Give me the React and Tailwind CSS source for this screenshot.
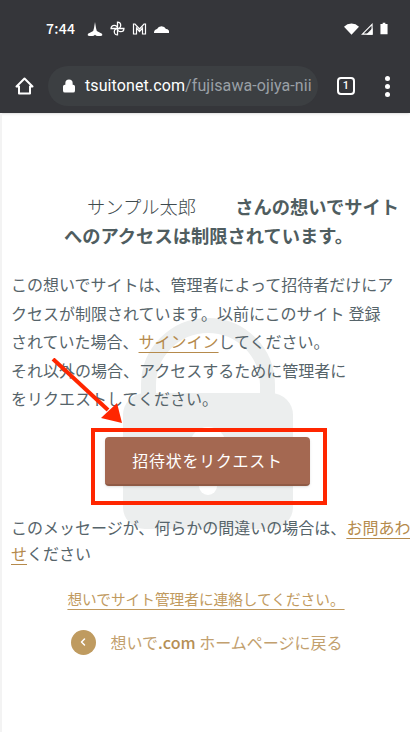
import { ChevronLeft, Lock } from "lucide-react";

const Lines = () => (
  <p>
    この想いでサイトは、管理者によって招待者だけにア
    <br />
    クセスが制限されています。以前にこのサイト<span className="ml-[4px]">登録</span>
    <br />
    されていた場合、
    <a className="text-[#b58a4c] underline underline-offset-4">サインイン</a>
    してください。
    <br />
    それ以外の場合、アクセスするために管理者に
    <br />
    をリクエストしてください。
  </p>
);

const LockMark = () => (
  <svg className="absolute left-[123px] top-[205px] pointer-events-none" width="172" height="212" viewBox="0 0 172 212">
    <path d="M25.500 90V67a59.500 59.500 0 0 1 119 0v23" fill="none" stroke="#eceeee" strokeWidth="15" />
    <rect x="0" y="75" width="170" height="136" rx="22" fill="#eceeee" />
    <circle cx="85" cy="127" r="18" fill="#fff" />
    <rect x="76" y="127" width="18" height="50" rx="9" fill="#fff" />
  </svg>
);

const StatusBar = () => (
  <div className="h-[59px] flex items-center pl-[46px] pr-[22px] text-white">
    <span className="text-[14px] font-medium tracking-[0.3px] w-[41px] -mt-[2px]">7:44</span>
    <div className="flex items-center gap-[7px] -mt-[2px]">
      <svg width="16" height="14" viewBox="0 0 16 14" fill="#fff">
        <path d="M8 0L9 6L9.800 9L15 11.800Q16 14 13.500 14H10.800Q9 14 8 12.800Q7 14 5.200 14H2.500Q0 14 1 11.800L6.200 9L7 6z" />
      </svg>
      <svg width="15" height="15" viewBox="0 0 14 14" fill="none" stroke="#fff" strokeWidth="1.200">
        <path d="M7 7V1a3 3 0 0 1 0 6zM7 7h6a3 3 0 0 1-6 0zM7 7v6a3 3 0 0 1 0-6zM7 7H1a3 3 0 0 1 6 0z" />
      </svg>
      <svg width="15" height="12" viewBox="0 0 14 12" fill="none" stroke="#fff" strokeWidth="1.200">
        <path d="M1 11V1h1.500L7 6l4.500-5H13v10H10V5L7 8.500 4 5v6z" />
      </svg>
      <svg width="15" height="9" viewBox="0 0 15 9" fill="#fff">
        <path d="M0 9a4 4 0 0 1 3-4 5 5 0 0 1 9 0 3 3 0 0 1 3 4z" />
      </svg>
    </div>
    <div className="ml-auto flex items-center -mt-[2px]">
      <svg width="15" height="12" viewBox="0 0 16 12" fill="#fff">
        <path d="M0 3.500a11.500 11.500 0 0 1 16 0L8 12z" />
      </svg>
      <svg className="ml-[2px]" width="12" height="12" viewBox="0 0 13 13" fill="none" stroke="#fff" strokeWidth="1.200">
        <path d="M12 1.500V12H1.500z" />
        <path d="M12 7V12H7z" fill="#fff" />
      </svg>
      <svg className="ml-[7px]" width="8" height="13" viewBox="0 0 9 13" fill="#fff">
        <path d="M3 0h3v1.500h2.500V13H.5V1.500H3z" />
      </svg>
    </div>
  </div>
);

const Toolbar = () => (
  <div className="h-[54px] flex items-center pl-[15px] pr-[20px] text-white">
    <svg className="shrink-0" width="19" height="18" viewBox="0 0 19 18" fill="none" stroke="#fff" strokeWidth="2" strokeLinejoin="round">
      <path d="M9.500 1.500L1.500 9.500H4V16.500H15V9.500H17.500z" />
    </svg>
    <div className="ml-[14px] w-[270px] h-[40px] rounded-full bg-[#3c3f42] flex items-center pl-[14px] overflow-hidden whitespace-nowrap text-[16px] tracking-[0.1px] font-['Roboto',sans-serif]">
      <Lock size={14} fill="#fff" strokeWidth={2.500} className="shrink-0 mr-[9px]" />
      <span>tsuitonet.com</span>
      <span className="text-[#9aa0a6]">/fujisawa-ojiya-nii</span>
    </div>
    <div className="ml-[19px] w-[18px] h-[18px] border-2 border-white rounded-[4px] flex items-center justify-center text-[11px] font-medium font-['Roboto',sans-serif]">
      1
    </div>
    <div className="ml-auto flex flex-col gap-[3px]">
      <span className="w-[5px] h-[5px] rounded-full bg-white" />
      <span className="w-[5px] h-[5px] rounded-full bg-white" />
      <span className="w-[5px] h-[5px] rounded-full bg-white" />
    </div>
  </div>
);

export default function App() {
  return (
    <div className="w-[410px] h-[747px] bg-white overflow-hidden font-['Noto_Sans_CJK_JP',sans-serif] text-[#56646a]">
      <div className="bg-[#35363a] h-[113px] shadow-sm">
        <StatusBar />
        <Toolbar />
      </div>
      <div className="relative h-[619px] border-l-2 border-[#f3f3f3]">
        <div className="-ml-[2px] relative h-full">
          <LockMark />
          <div className="relative pl-[11px] pr-[11px] text-[16px] leading-[28.500px]">
            <h1 className="pt-[79px] text-[18.300px] leading-[28.500px] font-bold text-[#4f5d60]">
              <div className="flex gap-[39px] pl-[76px] whitespace-nowrap">
                <span className="font-light text-[#3f4b4e]">サンプル太郎</span>
                <span>さんの想いでサイト</span>
              </div>
              <div className="pl-[7px] text-center whitespace-nowrap">へのアクセスは制限されています。</div>
            </h1>
            <div className="mt-[21px]">
              <Lines />
            </div>
            <div className="mt-[15px] flex justify-center pl-[8px]">
              <div className="border-4 border-[#ff2600] w-[236px] h-[77px] pt-[5px] pl-[10px]">
                <button className="block w-[205px] h-[49px] rounded-[4px] bg-[#a46851] border-b-2 border-[#8f5a45] shadow-sm text-white text-[16px] tracking-[0.7px]">
                  招待状をリクエスト
                </button>
              </div>
            </div>
            <p className="mt-[9px] leading-[26.500px] whitespace-nowrap">
              このメッセージが、何らかの間違いの場合は、
              <a className="text-[#b58a4c] underline underline-offset-4">お問あわ</a>
              <br />
              <a className="text-[#b58a4c] underline underline-offset-4">せ</a>
              ください
            </p>
            <p className="mt-[18px] text-center text-[14.670px] pl-[11px] pr-[9px]">
              <a className="text-[#c19a5e] underline underline-offset-4">想いでサイト管理者に連絡してください。</a>
            </p>
            <div className="mt-[15px] flex items-center justify-center gap-[15px] text-[#c2a06e] pl-[3px]">
              <span className="w-[25px] h-[25px] rounded-full bg-[#bf9b60] flex items-center justify-center">
                <ChevronLeft size={12} color="#fff" strokeWidth={3} />
              </span>
              <span className="text-[16px]">
                想いで<span className="font-medium text-[#b58f55]">.com</span> ホームページに戻る
              </span>
            </div>
          </div>
          <svg className="absolute left-[50px] top-[245px] pointer-events-none" width="74" height="68" viewBox="0 0 74 68">
            <path d="M3 1L58 52" stroke="#ff2600" strokeWidth="4" />
            <path d="M72 65L51 60L67 45z" fill="#ff2600" />
          </svg>
        </div>
      </div>
    </div>
  );
}
